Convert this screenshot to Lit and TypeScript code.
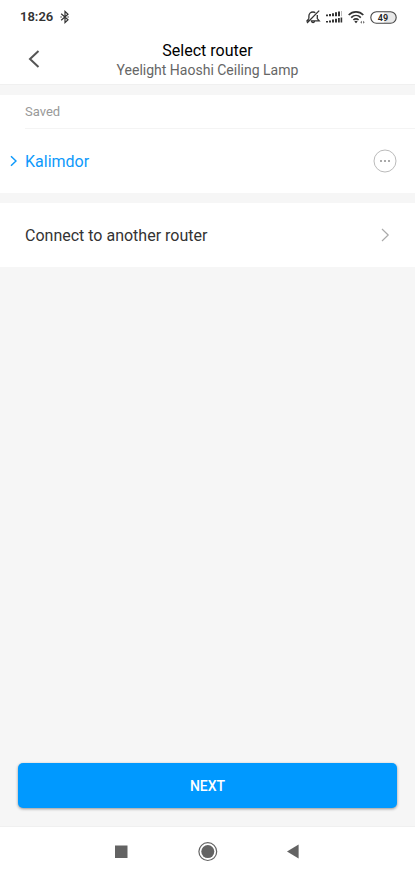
import { LitElement, html, css } from "lit";
import { customElement } from "lit/decorators.js";

@customElement("app-root")
export class AppRoot extends LitElement {
  static styles = css`
    :host {
      display: flex;
      flex-direction: column;
      min-height: 100vh;
      background: #f6f6f6;
      color: #333;
      font-family: Roboto, "Noto Sans", sans-serif;
      font-size: 16px;
    }
    * {
      box-sizing: border-box;
    }
    svg {
      display: block;
      flex: none;
      fill: none;
    }
    button {
      border: 0;
      padding: 0;
      background: none;
      color: inherit;
      font: inherit;
      cursor: pointer;
    }
    .top {
      background: #fff;
      border-bottom: 1px solid #f0f0f0;
    }
    .status {
      display: flex;
      justify-content: space-between;
      align-items: center;
      height: 34px;
      padding: 0 18px 0 20px;
    }
    .group {
      display: flex;
      align-items: center;
      gap: 5px;
    }
    .clock {
      gap: 7px;
    }
    .time {
      font-size: 13px;
      line-height: 16px;
      font-weight: 600;
    }
    .header {
      display: grid;
      grid-template-columns: 68px 1fr 68px;
      align-items: center;
      height: 50px;
    }
    .back {
      display: grid;
      place-items: center;
      height: 48px;
    }
    .titles {
      padding-top: 2px;
      text-align: center;
    }
    h1,
    h2,
    p {
      margin: 0;
      font-weight: 400;
    }
    h1 {
      color: #000;
      font-size: 16px;
      line-height: 20px;
    }
    .device {
      color: #666;
      font-size: 14px;
      line-height: 18px;
    }
    main {
      flex: 1;
      display: flex;
      flex-direction: column;
      gap: 10px;
      padding-top: 10px;
    }
    .card {
      background: #fff;
    }
    h2 {
      margin-left: 25px;
      border-bottom: 1px solid #f4f4f4;
      color: #999;
      font-size: 13px;
      line-height: 33px;
    }
    .row {
      display: flex;
      align-items: center;
      width: 100%;
      height: 64px;
      padding-right: 18px;
    }
    .pick {
      display: flex;
      flex: 1;
      align-items: center;
      height: 100%;
      text-align: left;
    }
    .mark {
      display: grid;
      place-items: center;
      width: 25px;
    }
    .saved {
      color: #0d99fb;
    }
    .other {
      justify-content: space-between;
      padding-left: 25px;
    }
    .actions {
      margin-top: auto;
      padding: 0 18px 18px;
    }
    .next {
      display: block;
      width: 100%;
      height: 45px;
      border-radius: 5px;
      background: #0099ff;
      box-shadow: 0 1px 3px rgba(0, 0, 0, 0.4);
      color: #fff;
      font-size: 14px;
      font-weight: 500;
    }
    .nav {
      display: flex;
      justify-content: center;
      align-items: center;
      gap: 60px;
      height: 50px;
      border-top: 1px solid #f0f0f0;
      background: #fff;
    }
    .nav button {
      display: grid;
      place-items: center;
      width: 26px;
      height: 40px;
    }
  `;

  private statusBar() {
    return html`
      <div class="status">
        <div class="group clock">
          <span class="time">18:26</span>
          <svg width="10" height="14" viewBox="0 0 10 14" stroke="#333" stroke-width="1.2">
            <path d="M1.2 3.8 8 9.8 5 12.6V1.4L8 4.2 1.2 10.2" />
            <path d="M.4 7h1.4M7.4 7h1.4" />
          </svg>
        </div>
        <div class="group">
          <svg width="15" height="14" viewBox="0 0 15 14" stroke="#333" stroke-width="1.3">
            <path d="M2.9 8.6V6c0-2.4 1.7-4 4.1-4 .9 0 1.7.2 2.3.7M11.3 5v3.6l1.9 2.2H4.8M5.6 11.4c.3 1.5 2.6 1.5 2.9 0M1 13 13.2.6M2.9 8.6 1 10.8h1.6" />
          </svg>
          <svg width="17" height="14" viewBox="0 0 17 14">
            <path d="M0 4.6h2v1.6H0zM3 4h2v2.2H3zM6 3.2h2v3H6zM9 2.2h2v4H9zM12 1.4h2v4.8h-2zM0 11h2v1.6H0zM3 10.4h2v2.2H3zM6 9.6h2v3H6zM9 8.8h2v3.8H9zM12 8h1.8v4.6H12zM14.6 7.6h1.6v5h-1.6z" fill="#333" />
            <path d="M15 1h1v5.2h-1z" fill="#bbb" />
          </svg>
          <svg width="17" height="14" viewBox="0 0 17 14" stroke="#333" stroke-width="1.7">
            <path d="M.7 5c4.1-4.2 10.5-4.2 14.6 0M3.2 7.6c2.8-2.8 6.8-2.8 9.6 0M5.4 10c1.6-1.6 3.6-1.6 5.2 0" />
            <path d="M6.3 11.4c1-.9 2.4-.9 3.4 0L8 13.2z" fill="#333" stroke="none" />
            <path d="m12.2 12.2 1.8-1.5v3zM16.8 12.2l-1.8-1.5v3z" fill="#777" stroke="none" />
          </svg>
          <svg width="27" height="13" viewBox="0 0 27 13">
            <rect x="1" y="1" width="25" height="11" rx="5.5" fill="#fff" />
            <path d="M14 1h6.5a5.5 5.5 0 0 1 0 11H14z" fill="#e8e8e8" />
            <rect x=".8" y=".8" width="25.4" height="11.4" rx="5.7" stroke="#444" stroke-width="1.1" />
            <text x="13" y="10" text-anchor="middle" font-size="9" font-weight="600" fill="#222">49</text>
          </svg>
        </div>
      </div>
    `;
  }

  render() {
    return html`
      <div class="top">
        ${this.statusBar()}
        <header class="header">
          <button class="back" aria-label="Back">
            <svg width="12" height="18" viewBox="0 0 12 18" stroke="#555" stroke-width="2">
              <path d="M10.5 1 2 9l8.5 8" />
            </svg>
          </button>
          <div class="titles">
            <h1>Select router</h1>
            <p class="device">Yeelight Haoshi Ceiling Lamp</p>
          </div>
        </header>
      </div>
      <main>
        <section class="card">
          <h2>Saved</h2>
          <div class="row">
            <button class="pick saved">
              <span class="mark">
                <svg width="8" height="12" viewBox="0 0 8 12" stroke="#0d99fb" stroke-width="1.5">
                  <path d="m2 1.2 5 4.8-5 4.8" />
                </svg>
              </span>
              Kalimdor
            </button>
            <button aria-label="More options">
              <svg width="24" height="24" viewBox="0 0 24 24">
                <circle cx="12" cy="12" r="11" stroke="#bbb" />
                <path d="M7 11h2v2H7zM11 11h2v2h-2zM15 11h2v2h-2z" fill="#aaa" />
              </svg>
            </button>
          </div>
        </section>
        <section class="card">
          <button class="row other">
            Connect to another router
            <svg width="24" height="14" viewBox="0 0 24 14" stroke="#aaa" stroke-width="1.2">
              <path d="m9 1 6.2 6L9 13" />
            </svg>
          </button>
        </section>
        <div class="actions">
          <button class="next">NEXT</button>
        </div>
      </main>
      <nav class="nav">
        <button aria-label="Recent apps">
          <svg width="14" height="14" viewBox="0 0 14 14">
            <path d="M0 .5h12.5V13H0z" fill="#636363" />
          </svg>
        </button>
        <button aria-label="Home">
          <svg width="20" height="20" viewBox="0 0 20 20">
            <circle cx="9.8" cy="9.6" r="8.9" stroke="#636363" stroke-width="1.2" />
            <circle cx="9.8" cy="9.6" r="6.5" fill="#636363" />
          </svg>
        </button>
        <button aria-label="Go back">
          <svg width="14" height="16" viewBox="0 0 14 16">
            <path d="M0 7.6 11.6.6v14z" fill="#636363" />
          </svg>
        </button>
      </nav>
    `;
  }
}
